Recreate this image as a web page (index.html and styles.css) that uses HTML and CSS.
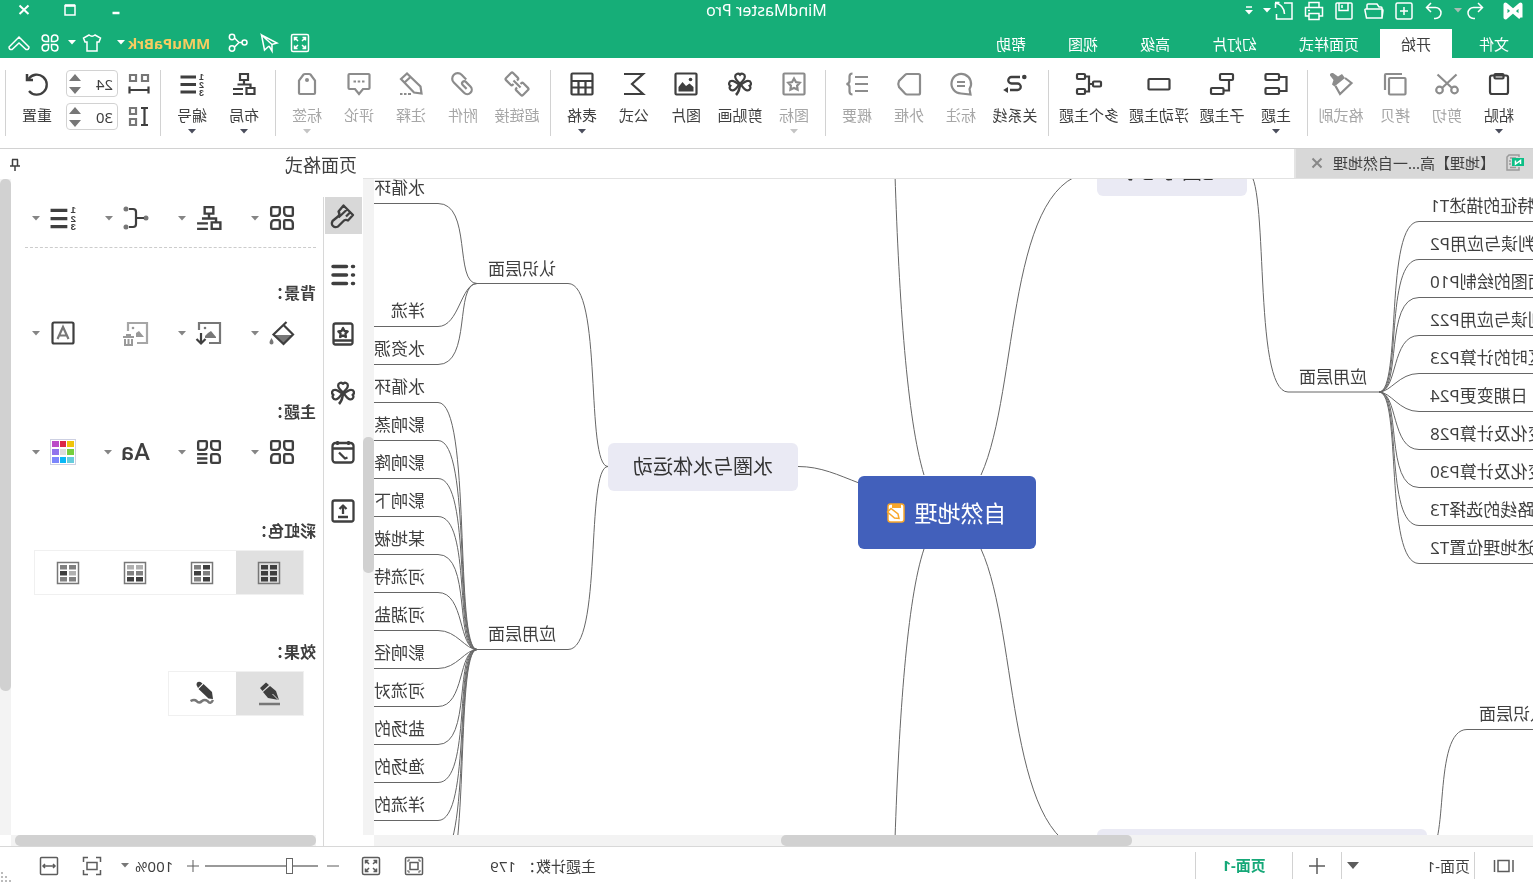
FILE: index.html
```html
<!DOCTYPE html>
<html lang="zh-CN">
<head>
<meta charset="utf-8">
<title>MindMaster Pro</title>
<link rel="stylesheet" href="styles.css">
</head>
<body>
<svg class="sprite" aria-hidden="true">
  <symbol id="caret" viewBox="0 0 8 5"><path d="M0 0h8L4 4.6z" fill="currentColor" stroke="none"/></symbol>
  <symbol id="quad" viewBox="0 0 24 24"><path d="M3 2h6a1 1 0 0 1 1 1v4a3 3 0 0 1-3 3H3a1 1 0 0 1-1-1V3a1 1 0 0 1 1-1zM15 2h6a1 1 0 0 1 1 1v6a1 1 0 0 1-1 1h-4a3 3 0 0 1-3-3V3a1 1 0 0 1 1-1zM5 14h4a1 1 0 0 1 1 1v6a1 1 0 0 1-1 1H3a1 1 0 0 1-1-1v-4a3 3 0 0 1 3-3zM15 14h4a3 3 0 0 1 3 3v4a1 1 0 0 1-1 1h-6a1 1 0 0 1-1-1v-6a1 1 0 0 1 1-1z"/></symbol>
  <symbol id="clover" viewBox="0 0 24 24"><path id="leaf" d="M12 11.500C8.600 8.500 7.200 7 7.200 4.700a2.700 2.700 0 0 1 4.800-1.900A2.700 2.700 0 0 1 16.800 4.700c0 2.300-1.400 3.800-4.800 6.800z"/><use href="#leaf" transform="rotate(-98 12 12.500)"/><use href="#leaf" transform="rotate(98 12 12.500)"/><path d="M12 11.500q.3 7.500 4 11.500" stroke-width="2.600"/></symbol>
  <symbol id="layout" viewBox="0 0 24 24"><path d="M8 2h8v6H8zM1.500 16h8v6h-8zM12 8v4M5.500 16v-3.500h13M13 17h10M13 22h10"/></symbol>
  <symbol id="numbers" viewBox="0 0 24 24"><g fill="currentColor" stroke="none"><path d="M8 3.500h15.500v3H8zM8 11h15.500v3H8zM8 18.500h15.500v3H8z"/><g class="digit"><text x="0" y="7.500">1</text><text x="0" y="15.500">2</text><text x="0" y="23.500">3</text></g></g></symbol>
  <symbol id="screen" viewBox="0 0 20 20"><rect x="1.500" y="1.500" width="17" height="17" rx="1.500"/><path d="M4.500 7.500v-3h3M5 5l3 3M12.500 4.500h3v3M15 5l-3 3M4.500 12.500v3h3M5 15l3-3M12.500 15.500h3v-3M15 15l-3-3"/></symbol>
</svg>

<div class="app">
  <header class="header">
    <div class="titlebar">
      <div class="quick">
        <svg class="i20 logo" viewBox="0 0 20 20"><path d="M2.500 16.500V3.500l15 13V3.500L11 9M2.500 16.500L9 11"/></svg>
        <div class="pair undo">
          <button class="ib" aria-label="撤销"><svg class="i20" viewBox="0 0 20 20"><path d="M7 2L2.500 6.500 7 11M3 6.500h8.500a5.500 5.500 0 0 1 0 11H10"/></svg></button>
          <svg class="caret dim"><use href="#caret"/></svg>
        </div>
        <button class="ib" aria-label="重做"><svg class="i20" viewBox="0 0 20 20"><path d="M13 2l4.500 4.500L13 11M17 6.500H8.500a5.500 5.500 0 0 0 0 11H10"/></svg></button>
        <button class="ib" aria-label="新建"><svg class="i20" viewBox="0 0 20 20"><rect x="2" y="2" width="16" height="16" rx="1.500"/><path d="M10 6v8M6 10h8"/></svg></button>
        <button class="ib" aria-label="打开"><svg class="i20" viewBox="0 0 20 20"><path d="M2 17V7a1 1 0 0 1 1-1h2l2-3h9q1 0 1 1v4M4 8h14q1.500 0 1 1.500L17.500 17H2L1 9.500Q1 8 2.500 8z"/></svg></button>
        <button class="ib" aria-label="保存"><svg class="i20" viewBox="0 0 20 20"><rect x="2" y="2" width="16" height="16" rx="1"/><path d="M6 2v7.500h9V2M12 4v3"/></svg></button>
        <button class="ib" aria-label="打印"><svg class="i20" viewBox="0 0 20 20"><path d="M5 6V1.500h10V6M5 15H1.500V6.500h17V15H15M5 12.500h10v6H5zM14 9.500h2"/></svg></button>
        <div class="pair">
          <button class="ib" aria-label="导出"><svg class="i20" viewBox="0 0 20 20"><path d="M10 2H2v16h15.500v-5M14.500 1.500H19M18.500 2v5M18.500 2Q10 4 9.500 13"/></svg></button>
          <svg class="caret"><use href="#caret"/></svg>
        </div>
        <svg class="more" viewBox="0 0 8 9"><path d="M1 1h6" stroke-width="1.500"/><path d="M0 4h8L4 8.500z" fill="currentColor" stroke="none"/></svg>
      </div>
      <h1 class="title">MindMaster Pro</h1>
      <div class="window">
        <button class="ib" aria-label="最小化"><svg class="i14" viewBox="0 0 14 14"><path d="M3.500 10h7" stroke-width="2.500"/></svg></button>
        <button class="ib" aria-label="最大化"><svg class="i14" viewBox="0 0 14 14"><path d="M2 2.500h10v9.500H2z"/><path d="M2 2.500h10" stroke-width="2.500"/></svg></button>
        <button class="ib" aria-label="关闭"><svg class="i14" viewBox="0 0 14 14"><path d="M2.500 2.500l9 8.500M11.500 2.500l-9 8.500" stroke-width="2"/></svg></button>
      </div>
    </div>
    <div class="menubar">
      <nav class="menus">
        <button class="menu file">文件</button><button class="menu active">开始</button><button class="menu">页面样式</button><button class="menu">幻灯片</button><button class="menu">高级</button><button class="menu">视图</button><button class="menu">帮助</button>
      </nav>
      <div class="tools">
        <button class="ib" aria-label="全屏"><svg class="i20"><use href="#screen"/></svg></button>
        <button class="ib" aria-label="发送"><svg class="i20" viewBox="0 0 20 20"><path d="M17.500 2L2 10l5 1.500L17.500 2l-3 15L10 13M7 11.500V18l3-5"/></svg></button>
        <button class="ib" aria-label="分享"><svg class="i20" viewBox="0 0 20 20"><circle cx="3.500" cy="9.500" r="2.500"/><circle cx="16" cy="4" r="2.700"/><circle cx="16" cy="15.500" r="2.700"/><path d="M6 9.500h3l4.500-4.500M9 9.500l4.500 4.500"/></svg></button>
        <button class="ib user">MMuPaBrk<svg class="caret"><use href="#caret"/></svg></button>
        <button class="ib shirt" aria-label="皮肤"><svg class="i20" viewBox="0 0 20 20"><path d="M7 2q3 2.500 6 0l5.500 3L17 9h-2v9H5V9H3L1.500 5z"/></svg><svg class="caret"><use href="#caret"/></svg></button>
        <button class="ib apps" aria-label="应用"><svg class="i20" viewBox="0 0 20 20"><path d="M8.500 8.500V5a3.200 3.200 0 1 0-3.300 3.500zM11.500 8.500V5a3.200 3.200 0 1 1 3.300 3.500zM8.500 11.500V15a3.200 3.200 0 1 1-3.300-3.500zM11.500 11.500V15a3.200 3.200 0 1 0 3.300-3.500z"/></svg></button>
        <button class="ib" aria-label="收起"><svg class="i22" viewBox="0 0 22 20"><path d="M1 14L11 4l10 10q0 3-3 2.500L11 10l-7 6.500Q1 17 1 14z"/></svg></button>
      </div>
    </div>
  </header>

  <div class="ribbon">
    <button class="tool"><svg class="i24" viewBox="0 0 24 24"><rect x="3" y="3.500" width="18" height="18.500" rx="2"/><rect x="7.500" y="2" width="9" height="4.500" rx="1"/></svg><span>粘贴</span><svg class="caret"><use href="#caret"/></svg></button>
    <button class="tool off"><svg class="i24" viewBox="0 0 24 24"><path d="M2.500 2.500L17 16M21.500 2.500L7 16"/><circle cx="4.500" cy="18" r="3.300"/><circle cx="19.500" cy="18" r="3.300"/></svg><span>剪切</span></button>
    <button class="tool off"><svg class="i24" viewBox="0 0 24 24"><rect x="1.500" y="6" width="16.500" height="16.500" rx="1"/><path d="M5 2h16a1 1 0 0 1 1 1v15"/></svg><span>拷贝</span></button>
    <button class="tool off w3"><svg class="i24" viewBox="0 0 24 24"><path d="M8 6L1.500 11 13 22l4.500-8"/><path d="M11 2l4 2.500L20 1q3.500-.5 3 2.500l-3.500 4.500 1.500 4.500-2.500 2L8 6z" fill="currentColor" stroke="none"/></svg><span>格式刷</span></button>
    <i class="sep"></i>
    <button class="tool"><svg class="i24" viewBox="0 0 24 24"><rect x="9" y="2" width="13.500" height="6" rx="1"/><rect x="9" y="16" width="13.500" height="6" rx="1"/><path d="M9 5H1.500v14H9"/></svg><span>主题</span><svg class="caret"><use href="#caret"/></svg></button>
    <button class="tool w3"><svg class="i24" viewBox="0 0 24 24"><rect x="1" y="2" width="13" height="6" rx="1"/><rect x="10.500" y="16" width="12.500" height="6" rx="1"/><path d="M5 8v10.500h5.500"/></svg><span>子主题</span></button>
    <button class="tool w4"><svg class="i24" viewBox="0 0 24 24"><rect x="1.500" y="7" width="21" height="10.500" rx="1"/></svg><span>浮动主题</span></button>
    <button class="tool w4"><svg class="i24" viewBox="1 0 24 24"><rect x="1" y="9.500" width="8" height="5" rx="1"/><rect x="17" y="2" width="8" height="5" rx="1"/><rect x="17" y="17" width="8" height="5" rx="1"/><path d="M9 12h4M17 4.500h-4v15h4"/></svg><span>多个主题</span></button>
    <i class="sep"></i>
    <button class="tool w3"><svg class="i24" viewBox="0 0 24 24"><path d="M7 5h8.500a3.200 3.200 0 0 1 0 6.500h-6a3.200 3.200 0 0 0 0 6.500H17" stroke-width="2.300"/><circle cx="2.700" cy="5" r="2.300" fill="currentColor" stroke="none"/><path d="M19 15l4.800 3-4.800 3z" fill="currentColor" stroke="none"/></svg><span>关系线</span></button>
    <button class="tool off"><svg class="i24" viewBox="0 0 24 24"><path d="M12 21.500A9.800 9.800 0 1 0 3.500 17L2.500 22.500zM8 10h8M8 14h8"/></svg><span>标注</span></button>
    <button class="tool off"><svg class="i24" viewBox="0 0 24 24"><path d="M2.500 2H14q1 0 2 1l6 6q1.500 3 0 6l-6 6.500q-1 1-2 1H2.500q-1.500 0-1.500-1.500V3.500Q1 2 2.500 2z"/></svg><span>外框</span></button>
    <button class="tool off"><svg class="i24" viewBox="0 0 24 24"><path d="M1 5h13M1 12h13M1 19h13M16.500 1.500q3 0 3 3V9q0 2.500 3 3-3 .5-3 3v4.500q0 3-3 3"/></svg><span>概要</span></button>
    <i class="sep"></i>
    <button class="tool off"><svg class="i24" viewBox="0 0 24 24"><rect x="1.500" y="1.500" width="21" height="21" rx="1"/><path d="M12 6.500l1.900 3.500 3.900.8-2.700 2.900.5 3.900L12 16l-3.600 1.600.5-3.900-2.700-2.900 3.900-.8z"/></svg><span>图标</span><svg class="caret"><use href="#caret"/></svg></button>
    <button class="tool w3"><svg class="i24"><use href="#clover"/></svg><span>剪贴画</span></button>
    <button class="tool"><svg class="i24" viewBox="0 0 24 24"><rect x="1.500" y="1.500" width="21" height="21" rx="1"/><circle cx="7.500" cy="7.500" r="1.800" fill="currentColor" stroke="none"/><path d="M4.500 19.500V15L8.500 11.500l3.500 2.500 3.500-4 4 5v4.500z" fill="currentColor" stroke="none"/></svg><span>图片</span></button>
    <button class="tool"><svg class="i24" viewBox="0 0 24 24"><path d="M22 2H3l11 10L3 22h19"/></svg><span>公式</span></button>
    <button class="tool"><svg class="i24" viewBox="0 0 24 24"><rect x="1.500" y="1.500" width="21" height="21" rx="1"/><path d="M1.500 9h21M1.500 15.500h21M8.500 9v13.500M15.500 9v13.500"/></svg><span>表格</span><svg class="caret"><use href="#caret"/></svg></button>
    <i class="sep"></i>
    <button class="tool off w3"><svg class="i24" viewBox="0 0 24 24"><g transform="rotate(-45 12 12)"><path d="M9.500 9.500V8.500q0-1.500-1.500-1.500H1.500Q0 7 0 8.500v7Q0 17 1.500 17H8q1.500 0 1.500-1.500v-1M14.500 9.500V8.500Q14.500 7 16 7h6.500Q24 7 24 8.500v7q0 1.500-1.500 1.500H16q-1.500 0-1.500-1.500v-1M7 12h10"/></g></svg><span>超链接</span></button>
    <button class="tool off"><svg class="i24" viewBox="0 0 24 24"><g transform="rotate(45 12 12)"><path d="M6.500 11V4.500a5.500 5.500 0 0 1 11 0V19a4.500 4.500 0 0 1-9 0v-6.500a2.200 2.200 0 0 1 4.400 0V18"/></g></svg><span>附件</span></button>
    <button class="tool off"><svg class="i24" viewBox="0 0 24 24"><path d="M1.500 21.500L2.500 14.500 16 1.500l6 5.500L9 20.500zM12.500 5l6 5.500"/><path d="M12 22h3M16.500 22h2.500M20.500 22H23"/></svg><span>注释</span></button>
    <button class="tool off"><svg class="i24" viewBox="0 0 24 24"><path d="M2.500 2h19a1 1 0 0 1 1 1v13a1 1 0 0 1-1 1H16l-4 5-4-5H2.500a1 1 0 0 1-1-1V3a1 1 0 0 1 1-1z"/><path d="M6.500 9.500H9M10.800 9.500h2.500M15 9.500h2.500"/></svg><span>评论</span></button>
    <button class="tool off"><svg class="i24" viewBox="0 0 24 24"><path d="M4 21V8.500L8.500 2.500Q9 2 10 2h4q1 0 1.500.5L20 8.500V21q0 1-1 1H5q-1 0-1-1z"/><circle cx="12" cy="8" r="2" fill="currentColor" stroke="none"/></svg><span>标签</span><svg class="caret"><use href="#caret"/></svg></button>
    <i class="sep"></i>
    <button class="tool"><svg class="i24"><use href="#layout"/></svg><span>布局</span><svg class="caret"><use href="#caret"/></svg></button>
    <button class="tool"><svg class="i24"><use href="#numbers"/></svg><span>编号</span><svg class="caret"><use href="#caret"/></svg></button>
    <i class="sep"></i>
    <div class="spacing">
      <label class="spin"><svg class="i22" viewBox="0 0 22 22"><path d="M2 2h6v6H2zM14 2h6v6h-6z" class="mid"/><path d="M1.500 13.500v7M20.500 13.500v7M1.500 17h19"/></svg>
        <span class="box"><input type="text" value="24" aria-label="水平间距"><svg class="steps" viewBox="0 0 12 22"><path d="M0 8l6-7 6 7zM0 14l6 7 6-7z"/></svg></span></label>
      <label class="spin"><svg class="i22" viewBox="0 0 22 22"><path d="M14 2h6v6h-6zM14 13h6v6h-6z" class="mid"/><path d="M2 2h7M2 19h7M5.500 2v17"/></svg>
        <span class="box"><input type="text" value="30" aria-label="垂直间距"><svg class="steps" viewBox="0 0 12 22"><path d="M0 8l6-7 6 7zM0 14l6 7 6-7z"/></svg></span></label>
    </div>
    <button class="tool"><svg class="i24" viewBox="0 0 24 24"><path d="M20.500 7A10 10 0 1 0 20 19" stroke-width="2.300"/><path d="M22 2v6h-6" stroke-width="2.500"/></svg><span>重置</span></button>
    <i class="sep"></i>
  </div>

  <main class="main">
    <section class="work">
      <div class="doctabs">
        <div class="doctab">
          <svg class="i20" viewBox="0 0 20 20"><path d="M6 4V2h10l2 2v13H6v-3M9 5h6M14 8h2M14 11h2M9 14.500h6" stroke="#999"/><rect x="1" y="5" width="12" height="8" fill="#0cbf86" stroke="none"/><path d="M4.500 11V7.500l5 3.500V7.500" stroke="#fff" stroke-width="1.500"/></svg>
          <span>【地理】高...一自然地理</span>
          <button class="ib" aria-label="关闭标签"><svg class="i12" viewBox="0 0 12 12"><path d="M1.500 1.500l9 9M10.500 1.500l-9 9" stroke-width="2"/></svg></button>
        </div>
      </div>
      <div class="stage">
        <div class="canvas">
          <svg class="links">
            <g>
              <path d="M674 304C695 296 712 287.500 735 287.500M609 296C626 240 634 120 638 -4M609 370C626 420 634 540 638 660M552 296C513 210 528 -7 436 -7M552 370C513 456 528 674 436 674"/>
              <path d="M286 -7C263 -7 281 213 245 213H154M106 674C83 674 101 550.500 66 550.500H0"/>
              <path d="M925 287.500C948 287.500 930 104.500 965 104.500H1056M925 287.500C948 287.500 930 470.500 965 470.500H1056"/>
            </g>
            <g>
              <path d="M154 213C131 213 149 42.500 114 42.500H0"/><path d="M154 213C131 213 149 80.500 114 80.500H0"/>
              <path d="M154 213C131 213 149 118.500 114 118.500H0"/><path d="M154 213C135 213 142 156.500 114 156.500H0"/>
              <path d="M154 213C142 213 134 194.500 114 194.500H0"/><path d="M154 213C142 213 134 232.500 114 232.500H0"/>
              <path d="M154 213C135 213 142 270.500 114 270.500H0"/><path d="M154 213C131 213 149 308.500 114 308.500H0"/>
              <path d="M154 213C131 213 149 346.500 114 346.500H0"/><path d="M154 213C131 213 149 384.500 114 384.500H0"/>
            </g>
            <g>
              <path d="M1056 104.500C1079 104.500 1061 24.500 1095 24.500H3000"/><path d="M1056 104.500C1072 104.500 1074 147.500 1095 147.500H3000"/><path d="M1056 104.500C1079 104.500 1061 185.500 1095 185.500H3000"/>
              <path d="M1056 470.500C1079 470.500 1061 223.500 1095 223.500H3000"/><path d="M1056 470.500C1079 470.500 1061 261.500 1095 261.500H3000"/>
              <path d="M1056 470.500C1079 470.500 1061 299.500 1095 299.500H3000"/><path d="M1056 470.500C1079 470.500 1061 337.500 1095 337.500H3000"/>
              <path d="M1056 470.500C1079 470.500 1061 375.500 1095 375.500H3000"/><path d="M1056 470.500C1075 470.500 1068 413.500 1095 413.500H3000"/>
              <path d="M1056 470.500C1068 470.500 1076 451.500 1095 451.500H3000"/><path d="M1056 470.500C1068 470.500 1076 489.500 1095 489.500H3000"/>
              <path d="M1056 470.500C1075 470.500 1068 527.500 1095 527.500H3000"/><path d="M1056 470.500C1079 470.500 1061 565.500 1095 565.500H3000"/>
              <path d="M1056 470.500C1079 470.500 1061 603.500 1095 603.500H3000"/><path d="M1056 470.500C1079 470.500 1061 641.500 1095 641.500H3000"/>
              <path d="M1056 470.500C1079 470.500 1061 679.500 1095 679.500H3000"/><path d="M1056 470.500C1079 470.500 1061 717.500 1095 717.500H3000"/>
            </g>
          </svg>
          <div class="node root"><span>自然地理</span><svg class="i18" viewBox="0 0 18 20"><rect x="1" y="1" width="16" height="18" rx="2.500" fill="#fff" stroke="#f9a72b" stroke-width="1.500"/><path d="M4 1h9v4H4z" fill="#f9a72b" stroke="none"/><path d="M6 15.500l1-4.500 7-5.500 3.500 3.500-7 6z" fill="#fff" stroke="#f9a72b" stroke-width="1.500"/></svg></div>
          <div class="node branch water">水圈与水体运动</div>
          <div class="node branch earth">地图与地球</div>
          <div class="node branch lower"></div>
          <div class="topic side-a know">认识层面</div>
          <div class="topic side-a apply">应用层面</div>
          <div class="topic side-b">应用层面</div>
          <div class="topic side-c">认识层面</div>
          <ul class="leaves left">
            <li>特征的描述T1</li><li>判读与应用P2</li><li>面图的绘制P10</li><li>判读与应用P22</li><li>区时的计算P23</li><li>日期变更P24</li><li>变化及计算P28</li><li>变化及计算P30</li><li>路线的选择T3</li><li>描述地理位置T2</li>
          </ul>
          <ul class="leaves first"><li>水循环</li></ul>
          <ul class="leaves right">
            <li>洋流</li><li>水资源</li><li>水循环</li><li>影响蒸</li><li>影响降</li><li>影响下</li><li>某地被</li><li>河流特</li><li>河湖盐</li><li>影响径</li><li>河流对</li><li>盐场的</li><li>渔场的</li><li>洋流的</li>
          </ul>
        </div>
        <div class="vbar"><i class="before"></i><i class="thumb"></i><i class="after"></i></div>
      </div>
      <div class="hbar"><i class="before"></i><i class="thumb"></i><i class="after"></i></div>
    </section>

    <aside class="panel">
      <div class="panel-head"><h2>页面格式</h2><button class="ib" aria-label="固定"><svg class="i14" viewBox="0 0 14 14"><path d="M4 1.500h6M4.500 1.500v6M9.500 1.500v6M2 8h10M7 8v5" stroke-width="1.500"/></svg></button></div>
      <div class="panel-body">
        <nav class="rail">
          <button class="railbtn on" aria-label="页面格式"><svg class="i26" viewBox="0 0 26 26"><path d="M12.500 2.500L3 12l5 5.500q3-1.500 5 1l5 5q3 1.500 5-.5t.500-5l-5.500-4.500q-2.500-2-.500-5zM9 6.500l8.500 8M6 9.500l4 4"/></svg></button>
          <button class="railbtn" aria-label="大纲"><svg class="i24" viewBox="0 0 24 24"><path d="M1.500 3.500h1M1.500 12h1M1.500 20.500h1M8.500 3.500H22M8.500 12H22M8.500 20.500H22" stroke-width="3.500" stroke-linecap="round"/></svg></button>
          <button class="railbtn" aria-label="图标"><svg class="i24" viewBox="0 0 24 24"><rect x="2.500" y="1.500" width="19" height="21" rx="2"/><path d="M2.500 18.500h19M12 6l1.500 3 3.200.5-2.300 2.300.5 3.200-2.900-1.500L9.100 15l.5-3.200L7.300 9.500l3.200-.5z"/></svg></button>
          <button class="railbtn" aria-label="剪贴画"><svg class="i24"><use href="#clover"/></svg></button>
          <button class="railbtn" aria-label="任务"><svg class="i24" viewBox="0 0 24 24"><rect x="1.500" y="3" width="21" height="19.500" rx="3"/><path d="M1.500 8.500h21M6.500 1v4M17.500 1v4M7 13.500l4 0" stroke-opacity="1" class="none"/><path d="M1.500 8.500h21M6.500 1v4M17.500 1v4M7.500 17.500l2.500 1 6-6"/></svg></button>
          <button class="railbtn" aria-label="导出"><svg class="i24" viewBox="0 0 24 24"><rect x="1.500" y="1.500" width="21" height="21" rx="2"/><path d="M12 15V8M8.500 10L12 6.500l3.500 3.500M7 18h10" stroke-width="2.300"/></svg></button>
        </nav>
        <div class="props-wrap">
          <div class="props">
            <div class="row first">
              <button class="pick" aria-label="结构"><svg class="i26"><use href="#quad"/></svg><svg class="caret"><use href="#caret"/></svg></button>
              <button class="pick" aria-label="布局"><svg class="i26"><use href="#layout"/></svg><svg class="caret"><use href="#caret"/></svg></button>
              <button class="pick" aria-label="连接线"><svg class="i26" viewBox="0 0 26 26"><circle cx="3" cy="13" r="2.500" class="dot"/><circle cx="23" cy="4" r="2.500" class="dot"/><circle cx="23" cy="22" r="2.500" class="dot"/><path d="M5 13h7M20 4h-4q-3 0-3 3v12q0 3 3 3h4"/></svg><svg class="caret"><use href="#caret"/></svg></button>
              <button class="pick" aria-label="编号"><svg class="i26"><use href="#numbers"/></svg><svg class="caret"><use href="#caret"/></svg></button>
            </div>
            <h3>背景：</h3>
            <div class="row">
              <button class="pick" aria-label="背景颜色"><svg class="i26" viewBox="0 0 26 26"><path d="M3 15h17l-8.500 9z" class="dot"/><path d="M8.500 2l13 12.500-10 9.500L2 14.500 11.500 5"/><path d="M23.500 18q4 6 0 6.500-4-.5 0-6.500z" class="dot"/></svg><svg class="caret"><use href="#caret"/></svg></button>
              <button class="pick" aria-label="背景图片"><svg class="i26" viewBox="0 0 26 26"><path d="M13 23H2V3h21v7" class="mid"/><path d="M6 17l5-6 3 2 3 3v2H6z" class="dot"/><circle cx="17" cy="8" r="1.300" class="dot"/><path d="M21 13v10M16.500 19l4.500 4.500 4.500-4.500"/></svg><svg class="caret"><use href="#caret"/></svg></button>
              <button class="pick off" aria-label="删除背景"><svg class="i26" viewBox="0 0 26 26"><path d="M12 23H2V3h19v8"/><path d="M5 17l5-6 3 2v4zM15 16h11v2H15zM18 14h5v2h-5zM16 19h2v7h-2zM18 24h5v2h-5zM19.500 19h2v5h-2zM23 19h2v7h-2z" class="dot"/><circle cx="16" cy="8" r="1.300" class="dot"/></svg></button>
              <button class="pick" aria-label="水印"><svg class="i26" viewBox="0 0 26 26"><rect x="2.500" y="2.500" width="21" height="21" rx="1.500"/><path d="M7.500 19L13 7l5.500 12M9.500 15.500h7" class="mid"/></svg><svg class="caret"><use href="#caret"/></svg></button>
            </div>
            <h3>主题：</h3>
            <div class="row">
              <button class="pick" aria-label="主题"><svg class="i26"><use href="#quad"/></svg><svg class="caret"><use href="#caret"/></svg></button>
              <button class="pick" aria-label="主题样式"><svg class="i26" viewBox="0 0 24 24"><path d="M3 2h6a1 1 0 0 1 1 1v4a3 3 0 0 1-3 3H3a1 1 0 0 1-1-1V3a1 1 0 0 1 1-1zM15 2h6a1 1 0 0 1 1 1v6a1 1 0 0 1-1 1h-4a3 3 0 0 1-3-3V3a1 1 0 0 1 1-1zM5 14h4a1 1 0 0 1 1 1v6a1 1 0 0 1-1 1H3a1 1 0 0 1-1-1v-4a3 3 0 0 1 3-3zM13.500 14H23M13.500 18H23M13.500 22H23"/></svg><svg class="caret"><use href="#caret"/></svg></button>
              <button class="pick font" aria-label="主题字体"><span>Aa</span><svg class="caret"><use href="#caret"/></svg></button>
              <button class="pick" aria-label="主题颜色"><svg class="i26" viewBox="0 0 26 26"><rect x=".5" y=".5" width="25" height="25" fill="#fff" stroke="#cdd0e2" stroke-width="1"/><g stroke="none"><path d="M2 2h7v6H2z" fill="#f0c40c"/><path d="M10 2h6v6h-6z" fill="#dc2848"/><path d="M17 2h7v6h-7z" fill="#bb4cc8"/><path d="M2 10h7v6H2z" fill="#76cf3e"/><path d="M10 10h6v6h-6z" fill="#dcdcdc"/><path d="M17 10h7v6h-7z" fill="#9173ec"/><path d="M2 18h7v6H2z" fill="#66ccdc"/><path d="M10 18h6v6h-6z" fill="#0ab8f6"/><path d="M17 18h7v6h-7z" fill="#7c86fc"/></g></svg><svg class="caret"><use href="#caret"/></svg></button>
            </div>
            <h3>彩虹色：</h3>
            <div class="seg">
              <button class="on" aria-label="彩虹色一"><svg class="i24" viewBox="0 0 24 24"><path d="M1.500 1.500h21v21h-21z" class="frame"/><path d="M4 4h7v4.500H4zM13 4h7v4.500h-7zM4 10h7v4.500H4zM13 10h7v4.500h-7zM4 16h7v4.500H4zM13 16h7v4.500h-7z" class="c1"/></svg></button>
              <button aria-label="彩虹色二"><svg class="i24" viewBox="0 0 24 24"><path d="M1.500 1.500h21v21h-21z" class="frame"/><path d="M4 4h7v4.500H4zM13 10h7v4.500h-7zM4 16h7v4.500H4z" class="c1"/><path d="M13 4h7v4.500h-7zM4 10h7v4.500H4zM13 16h7v4.500h-7z" class="c2"/></svg></button>
              <button aria-label="彩虹色三"><svg class="i24" viewBox="0 0 24 24"><path d="M1.500 1.500h21v21h-21z" class="frame"/><path d="M4 4h7v4.500H4zM13 4h7v4.500h-7z" class="c3"/><path d="M4 10h7v4.500H4zM13 10h7v4.500h-7z" class="c2"/><path d="M4 16h7v4.500H4zM13 16h7v4.500h-7z" class="c1"/></svg></button>
              <button aria-label="彩虹色四"><svg class="i24" viewBox="0 0 24 24"><path d="M1.500 1.500h21v21h-21z" class="frame"/><path d="M4 4h7v4.500H4zM13 4h7v4.500h-7zM4 16h7v4.500H4zM13 16h7v4.500h-7z" class="c2"/><path d="M4 10h7v4.500H4z" class="c3"/><path d="M13 10h7v4.500h-7z" class="c1"/></svg></button>
            </div>
            <h3 class="tight">效果：</h3>
            <div class="seg">
              <button class="on" aria-label="普通"><svg class="i24" viewBox="0 0 24 24"><path d="M2 18l3-9 6-5 7 6-5 6zM12 3l3-2.500 6 5.500-2.500 3z" class="c1"/><path d="M2.500 18l6-6" stroke="#e0e0e0" stroke-width="1"/><path d="M1 22h21" class="mid" stroke-width="2.500"/></svg></button>
              <button aria-label="手绘"><svg class="i26" viewBox="0 0 26 26"><path d="M2 18l1-7 8.500-8 5 5-10 9.500zM12.500 2.500l2-1.500q4-1 4 3l-1.500 3z" class="c1"/><path d="M2 19q2.500 5 5.500 1 3-2 5.500 0 3 3 5.500 0 2-2 6 0" class="mid" stroke-width="2.500"/></svg></button>
            </div>
          </div>
          <div class="hbar small"><i class="thumb"></i></div>
        </div>
        <div class="vbar tall"><i class="thumb"></i><i class="after"></i></div>
      </div>
    </aside>
  </main>

  <footer class="status">
    <button class="ib cell outline" aria-label="视图"><svg class="i20" viewBox="0 0 20 20"><path d="M5 4.500h11v11H5zM1 4v12M19.500 4v12"/></svg></button>
    <div class="cell pages"><select aria-label="页面"><option>页面-1</option></select><svg class="tri" viewBox="0 0 12 7"><path d="M0 0h12L6 7z" fill="currentColor"/></svg></div>
    <button class="ib cell add" aria-label="添加页面"><svg class="i18" viewBox="0 0 18 18"><path d="M9 1v16M1 9h16"/></svg></button>
    <button class="ib cell page">页面-1</button>
    <div class="info">主题计数：<span>179</span></div>
    <button class="ib fit" aria-label="适合页面"><svg class="i20" viewBox="0 0 20 20"><rect x="1.500" y="1.500" width="17" height="17" rx="1"/><rect x="6" y="6.500" width="8" height="7"/><path d="M4 6V4h2M14 4h2v2M4 14v2h2M14 16h2v-2" stroke-width="1"/></svg></button>
    <button class="ib full" aria-label="全屏"><svg class="i20"><use href="#screen"/></svg></button>
    <button class="ib" aria-label="缩小"><svg class="i14" viewBox="0 0 14 14"><path d="M1 7h12" stroke-width="1"/></svg></button>
    <input class="zoom" type="range" min="0" max="100" value="24" aria-label="缩放">
    <button class="ib" aria-label="放大"><svg class="i14" viewBox="0 0 14 14"><path d="M1 7h12M7 1v12" stroke-width="1"/></svg></button>
    <button class="ib percent">100%<svg class="caret"><use href="#caret"/></svg></button>
    <button class="ib focus" aria-label="聚焦"><svg class="i20" viewBox="0 0 20 20"><path d="M1.500 6V1.500H6M14 1.500h4.500V6M18.500 14v4.500H14M6 18.500H1.500V14M5 6.500h10v7H5z"/></svg></button>
    <button class="ib" aria-label="适合宽度"><svg class="i20" viewBox="0 0 20 20"><rect x="1.500" y="1.500" width="17" height="17" rx="1"/><path d="M4 10h12M6 8l-2 2 2 2M14 8l2 2-2 2"/></svg></button>
    <svg class="grip" viewBox="0 0 12 12"><path d="M9 0h2v2H9zM5 4h2v2H5zM9 4h2v2H9zM1 8h2v2H1zM5 8h2v2H5zM9 8h2v2H9z" fill="#bbb"/></svg>
  </footer>
</div>
</body>
</html>
```

FILE: styles.css
```css
* { box-sizing: border-box; }

body {
  margin: 0;
  font-family: "Noto Sans", "Noto Sans CJK SC", sans-serif;
  font-size: 15px;
  line-height: 20px;
  color: #3f3f3f;
  background: #fff;
}

/* the whole window is shown flipped left to right */
.app {
  display: flex;
  flex-direction: column;
  height: 100vh;
  overflow: hidden;
  transform: scaleX(-1);
}

button, input, select {
  font: inherit;
  color: inherit;
  border: 0;
  padding: 0;
  margin: 0;
  background: none;
}

h1, h2, h3, ul { margin: 0; padding: 0; list-style: none; font-weight: 400; }

svg { display: block; flex: none; fill: none; stroke: currentColor; stroke-width: 2; overflow: visible; }
.sprite { position: absolute; width: 0; height: 0; }
.i12 { width: 12px; height: 12px; }
.i14 { width: 14px; height: 14px; }
.i18 { width: 18px; height: 20px; }
.i20 { width: 20px; height: 20px; }
.i22 { width: 22px; height: 22px; }
.i24 { width: 24px; height: 24px; }
.i26 { width: 26px; height: 26px; }
.caret { width: 8px; height: 5px; }
.mid { stroke: #777; }
.dot { fill: #777; stroke: none; }
.none { stroke: none; }
.digit { font: 700 9px "Liberation Sans", sans-serif; }
.ib { display: flex; align-items: center; justify-content: center; white-space: nowrap; }

/* header */
.header { background: #16ae78; color: #fff; flex: none; }
.header svg { stroke-width: 1.500; }
.titlebar { display: grid; grid-template-columns: 1fr auto 1fr; align-items: center; height: 23px; }
.quick { display: flex; align-items: center; gap: 10px; padding: 0 0 2px 10px; }
.quick .logo { stroke-width: 4; stroke-linejoin: round; }
.pair { display: flex; align-items: center; gap: 3px; }
.undo { margin-left: 8px; }
.dim { color: #a8bdb4; }
.more { width: 8px; height: 9px; }
.title { padding-bottom: 2px; font-size: 16px; line-height: 21px; }
.window { display: flex; justify-content: flex-end; gap: 32px; padding: 0 17px 4px 0; }
.menubar { display: flex; justify-content: space-between; padding-top: 6px; }
.menus { display: flex; }
.menu { height: 29px; padding: 1px 21px 0; line-height: 28px; }
.menu.file { padding: 1px 27px 0 24px; }
.menu.active { background: #fff; color: #3f3f3f; }
.tools { display: flex; align-items: center; gap: 11px; padding: 0 8px 2px 0; }
.user { gap: 3px; margin-left: 7px; font-weight: 700; color: #f8cc60; }
.user .caret { color: #fff; }
.shirt { gap: 6px; margin-left: 4px; }
.apps { margin: 0 -1px 0 -3px; }

/* ribbon */
.ribbon { display: flex; flex: none; height: 91px; padding: 12px 0 0 8px; border-bottom: 1px solid #d2d2d2; }
.ribbon svg { stroke-width: 2.200; }
.tool { display: flex; flex-direction: column; align-items: center; width: 52px; height: 68px; padding-top: 2px; white-space: nowrap; }
.tool span { margin: 9px 0 4px; line-height: 20px; }
.tool .caret { color: #4a4d5c; }
.w3 { width: 56px; }
.w4 { width: 70px; }
.off { color: #8c8c8c; }
.tool.off span { color: #a6a6a6; }
.tool.off .caret { color: #c4c4c4; }
.sep { width: 1px; height: 66px; margin: 0 5px; background: #d2d2d2; }
.spacing { display: flex; flex-direction: column; gap: 6px; margin: 0 3px 0 5px; }
.spin { display: flex; align-items: center; gap: 10px; height: 27px; }
.box { display: flex; align-items: center; width: 52px; height: 27px; padding: 0 2px 0 4px; border: 1px solid #d2d2d2; border-radius: 4px; }
.box input { width: 33px; min-width: 0; height: 24px; }
.steps { width: 12px; height: 22px; }
.steps path { fill: #777; stroke: none; }

/* work area */
.main { display: flex; flex: 1; min-height: 0; }
.work { display: flex; flex-direction: column; flex: 1; min-width: 0; }
.doctabs { display: flex; flex: none; height: 30px; border-bottom: 1px solid #e2e2e2; }
.doctab { display: flex; align-items: center; width: 239px; padding: 0 15px 1px 8px; background: #d8d8d8; border-right: 2px solid #e4e4e4; white-space: nowrap; }
.doctab svg { stroke-width: 1.500; }
.doctab span { flex: 1; margin-left: 10px; }
.doctab .ib { color: #888; }
.stage { display: flex; flex: 1; min-height: 0; }
.canvas { position: relative; flex: 1; min-width: 0; overflow: hidden; font-size: 17px; line-height: 24px; }
.links { position: absolute; left: 0; top: 0; width: 100%; height: 100%; stroke: #666; stroke-width: 1; }
.node { position: absolute; display: flex; align-items: center; justify-content: center; border-radius: 6px; white-space: nowrap; }
.root { left: 497px; top: 297px; width: 178px; height: 73px; gap: 9px; background: #4260bb; color: #fff; font-size: 23px; }
.branch { height: 48px; background: #eaeaf4; font-size: 20px; color: #333; }
.water { left: 735px; top: 264px; width: 190px; }
.earth { left: 286px; top: -31px; width: 150px; }
.lower { left: 106px; top: 650px; width: 330px; }
.topic { position: absolute; white-space: nowrap; }
.side-a { left: 977px; }
.know { top: 78px; }
.apply { top: 443px; }
.side-b { left: 166px; top: 186px; }
.side-c { left: -14px; top: 523px; }
.leaves { position: absolute; white-space: nowrap; }
.leaves li { height: 38px; }
.left { left: -97px; top: 15px; width: 200px; }
.left li { display: flex; justify-content: flex-end; }
.first { left: 1108px; }
.leaves.first { top: -3px; }
.right { left: 1108px; top: 120px; }

/* scroll bars */
.vbar { display: flex; flex-direction: column; flex: none; width: 11px; background: #f3f3f3; }
.hbar { display: flex; flex: none; height: 11px; margin-right: 11px; background: #f3f3f3; }
.thumb { background: #d1d1d1; border-radius: 5px; }
.vbar .before { flex: 258; }
.vbar .thumb { flex: 136; }
.vbar .after { flex: 262; }
.hbar .before { flex: 401; }
.hbar .thumb { flex: 351; }
.hbar .after { flex: 407; }
.tall { margin-bottom: 11px; }
.tall .thumb { flex: 512; }
.tall .after { flex: 144; }
.hbar.small { margin: 0 0 0 7px; padding-right: 4px; }

/* side panel */
.panel { display: flex; flex-direction: column; flex: none; width: 363px; }
.panel-head { display: flex; align-items: center; justify-content: space-between; height: 30px; padding: 1px 8px 0 6px; }
.panel-head h2 { font-size: 18px; line-height: 26px; }
.panel-body { display: flex; flex: 1; min-height: 0; }
.rail { display: flex; flex-direction: column; gap: 22px; width: 39px; padding: 18px 1px 0; }
.railbtn { display: flex; align-items: center; justify-content: center; width: 37px; height: 37px; }
.railbtn svg { stroke-width: 2.300; stroke-linejoin: round; }
.railbtn.on { background: #d8d8d8; }
.props-wrap { display: flex; flex-direction: column; flex: 1; min-width: 0; margin-top: 18px; border-left: 1px solid #d8d8d8; }
.props { flex: 1; padding: 2px 0 0 7px; }
.row { display: flex; height: 38px; }
.row.first { height: 49px; padding-bottom: 10px; margin-right: 14px; border-bottom: 1px dashed #ccc; }
.pick { display: flex; align-items: center; gap: 10px; width: 73px; flex: none; padding-left: 21px; }
.pick svg { stroke-width: 2.200; }
.pick .caret { color: #858585; }
.pick.off { color: #a6a6a6; }
.pick.off .dot { fill: #999; }
.font { padding-left: 20px; gap: 9px; font-family: Roboto, sans-serif; font-weight: 500; font-size: 24px; }
.props h3 { margin: 48px 0 9px; font-size: 16px; line-height: 24px; font-weight: 700; }
.props .first + h3 { margin-top: 33px; }
.props h3.tight { margin-top: 45px; }
.seg { display: flex; width: max-content; height: 45px; margin: -2px 0 0 12px; border: 1px solid #f0f0f0; }
.seg button { display: flex; align-items: center; justify-content: center; width: 67px; }
.seg .on { background: #e0e0e0; }
.frame { stroke: #777; stroke-width: 1.500; }
.c1 { fill: #3f3f3f; stroke: none; }
.c2 { fill: #808080; stroke: none; }
.c3 { fill: #b0b0b0; stroke: none; }

/* status bar */
.status { display: flex; align-items: center; flex: none; position: relative; height: 38px; padding-right: 39px; border-top: 1px solid #d8d8d8; }
.status svg { stroke-width: 1.500; color: #5c5c5c; }
.cell { height: 27px; border-right: 1px solid #d2d2d2; }
.outline { width: 59px; }
.pages { display: flex; align-items: center; width: 133px; padding: 0 5px 0 4px; }
.pages select { flex: 1; min-width: 0; appearance: none; }
.tri { width: 12px; height: 7px; stroke: none; }
.add { width: 49px; }
.page { width: 97px; padding-bottom: 2px; font-weight: 700; color: #16a878; }
.info { margin-left: auto; white-space: nowrap; }
.info span { margin-left: 5px; }
.fit { margin: 0 23px 0 66px; }
.full { margin-right: 21px; }
.zoom { width: 113px; height: 18px; margin: 0 5px 0 8px; appearance: none; }
.zoom::-webkit-slider-runnable-track { height: 2px; background: #999; }
.zoom::-webkit-slider-thumb { appearance: none; width: 7px; height: 16px; margin-top: -7px; background: #fff; border: 1px solid #666; }
.percent { gap: 6px; margin: 0 19px 0 13px; }
.percent .caret { color: #777; }
.focus { margin-right: 23px; }
.grip { position: absolute; right: 0; bottom: 0; width: 12px; height: 12px; stroke: none; }
```
